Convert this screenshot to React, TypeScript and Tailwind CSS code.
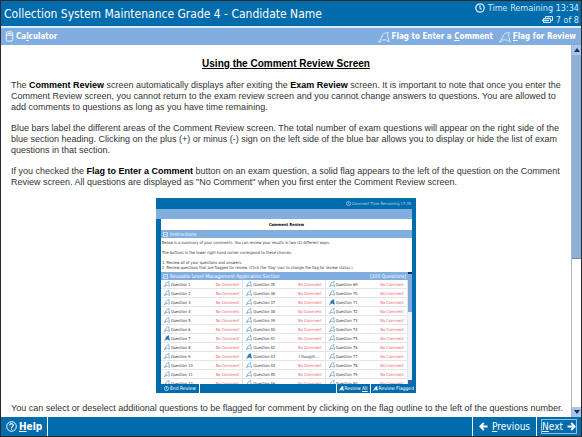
import type { ReactNode } from "react";

const uiFont = "font-['DejaVu_Sans_Condensed','DejaVu_Sans',sans-serif] [font-stretch:condensed]";
const FIRST_QUESTIONS = [1, 35, 69];
const FLAGGED = [7, 43, 71];

function Flag({ className, solid = false }: { className: string; solid?: boolean }) {
  return (
    <svg viewBox="0 0 12 12" className={className} fill={solid ? "currentColor" : "none"} stroke="currentColor" strokeWidth="1" aria-hidden="true">
      <path d="M1.2 10.8 5 3.4C6.4 1.6 7.6 2.6 10 1L9.6 5.4l1.6 5.2C9 10.8 8 8 6 8.8 4.4 9.4 3.6 9 2.6 8.6" />
      <path d="M.2 10.8h3" />
    </svg>
  );
}

function Calculator() {
  return (
    <svg viewBox="0 0 9 12" className="h-[11px] w-[9px]" fill="none" stroke="currentColor" aria-hidden="true">
      <rect x="1" y="1" width="7" height="10" rx="1.5" />
      <path d="M1 4.5h7M2.5 2.8h4" />
    </svg>
  );
}

function Clock({ className }: { className: string }) {
  return (
    <svg viewBox="0 0 10 10" className={className} fill="none" stroke="currentColor" strokeWidth="1.3" aria-hidden="true">
      <circle cx="5" cy="5" r="4.2" />
      <path d="M5 2.2v3l1.6 1.4" />
    </svg>
  );
}

function Pages() {
  return (
    <svg viewBox="0 0 12 8" className="h-2 w-3" fill="none" stroke="currentColor" aria-hidden="true">
      <path d="M3.5 2.5v-2h7v4H9M1.5 2.5h7v4h-7z" />
      <path d="M0 4.5h7M5 .5h4" strokeWidth="1.4" />
    </svg>
  );
}

function Arrow({ className }: { className: string }) {
  return (
    <svg viewBox="0 0 9 9" className={className} fill="none" stroke="currentColor" strokeWidth="1.8" aria-hidden="true">
      <path d="M8.5 4.5H1.5M4.8 1 1.3 4.5 4.8 8" />
    </svg>
  );
}

function Help() {
  return (
    <svg viewBox="0 0 11 11" className="size-[11px]" fill="none" stroke="currentColor" aria-hidden="true">
      <circle cx="5.5" cy="5.5" r="4.8" />
      <path d="M3.8 4.3c0-2.2 3.5-2 3.5 0 0 1.2-1.7 1.2-1.7 2.6M5.6 7.6v1.2" strokeWidth="1.2" />
    </svg>
  );
}

function Section({ children, count }: { children: ReactNode; count?: string }) {
  return (
    <div className="flex h-2 items-center gap-[2px] bg-[#82addf] px-[2px] text-[5px] leading-[8px] text-white">
      <svg viewBox="0 0 5 5" className="size-[5px]" fill="none" stroke="currentColor" strokeWidth=".6" aria-hidden="true">
        <path d="M.5.5h4v4h-4zM1.5 2.5h2" />
      </svg>
      <span className="flex-1">{children}</span>
      {count && <span>{count}</span>}
    </div>
  );
}

function QuestionCell({ number }: { number: number }) {
  return (
    <td className="h-[9px] border-r border-b border-[#e2e6ea] p-0">
      <div className="flex items-center gap-px pr-[3px] pl-[3px]">
        <Flag className="size-[6px] shrink-0 text-[#2474b5]" solid={FLAGGED.includes(number)} />
        <span className="flex-1">Question {number}</span>
        {number === 43 ? <span className="pr-[2px]">I thought ...</span> : <span className="text-[#f0525c]">No Comment</span>}
      </div>
    </td>
  );
}

function ReviewPreview() {
  return (
    <figure className={`mx-auto w-[260px] bg-[#006cab] text-[4px] leading-[5px] text-[#333] ${uiFont}`}>
      <div className="flex h-[11px] items-center justify-end gap-px pr-[5px] text-[#b9daf2]">
        <Clock className="size-[5px]" />
        Comment Time Remaining 17:35
      </div>
      <div className="mr-1 h-[10px] bg-[#82addf]" />
      <div className="mr-1 ml-[5px] bg-white">
        <h2 className="py-[3px] text-center font-bold text-black">Comment Review</h2>
        <Section>Instructions</Section>
        <div className="flex flex-col gap-[5px] px-px pt-[2px] pb-[2px]">
          <p>Below is a summary of your comments. You can review your results in two (2) different ways.</p>
          <p>The buttons in the lower right-hand corner correspond to these choices:</p>
          <p>
            1. Review all of your questions and answers.
            <br />
            2. Review questions that are flagged for review. (Click the &apos;flag&apos; icon to change the flag for review status.)
          </p>
        </div>
        <div className="flex h-[112px]">
          <div className="flex-1 overflow-hidden">
            <Section count="[100 Questions]">Reusable Level Management Application Section</Section>
            <table className="w-full table-fixed border-separate border-spacing-0">
              <tbody>
                {Array.from({ length: 12 }, (_, row) => (
                  <tr key={row}>
                    {FIRST_QUESTIONS.map((first) => (
                      <QuestionCell key={first} number={first + row} />
                    ))}
                  </tr>
                ))}
              </tbody>
            </table>
          </div>
          <div className="flex w-1 flex-col justify-between bg-[#eef2f7]">
            <div className="h-10 border-t-2 border-[#12306a] bg-[#82a9dc]" />
            <div className="h-1 bg-[#2f66a6]" />
          </div>
        </div>
      </div>
      <div className="flex h-[9px] items-stretch text-[5px] text-white">
        <span className="ml-[5px] flex items-center gap-px border-r border-white px-[3px]">
          <Clock className="size-[5px]" />
          End Review
        </span>
        <span className="ml-auto flex items-center gap-px border-l border-white px-[2px]">
          <Flag className="size-[5px]" solid />
          <span>Review <u>All</u></span>
        </span>
        <span className="flex items-center gap-px border-l border-white px-[2px]">
          <Flag className="size-[5px]" solid />
          Review Flagged
        </span>
      </div>
    </figure>
  );
}

function ScrollArrow({ up = false }: { up?: boolean }) {
  return (
    <button type="button" aria-label={up ? "Scroll up" : "Scroll down"} className="flex h-[10px] items-center justify-center bg-[#a9c4e6] text-[#12306a]">
      <svg viewBox="0 0 6 4" className="h-1 w-[6px]" fill="currentColor" aria-hidden="true">
        <path d={up ? "M0 4 3 0l3 4z" : "M0 0h6L3 4z"} />
      </svg>
    </button>
  );
}

export default function App() {
  return (
    <div className={`flex h-screen flex-col border border-[#2b2b2b] bg-white ${uiFont}`}>
      <header className="flex h-[25px] shrink-0 items-center justify-between bg-[#006cab] pr-[2px] pl-[3px] text-white">
        <h1 className="text-[12px] leading-4">Collection System Maintenance Grade 4 - Candidate Name</h1>
        <div className="flex flex-col items-end text-[9px] leading-[12px] text-[#d3eafa]">
          <span className="flex items-center gap-[3px]">
            <Clock className="size-[10px]" />
            Time Remaining 13:34
          </span>
          <span className="flex items-center gap-[2px]">
            <Pages />7 of 8
          </span>
        </div>
      </header>
      <nav className="flex h-[19px] shrink-0 items-center gap-[6px] border-t-2 border-[#d8ecfa] bg-[#82addf] pr-[5px] pl-1 text-[8px] leading-3 font-bold text-white">
        <button type="button" className="mr-auto flex items-center gap-[2px]">
          <Calculator />
          <span>Ca<u>l</u>culator</span>
        </button>
        <button type="button" className="flex items-center gap-[2px]">
          <Flag className="size-3 opacity-70" />
          <span>Flag to Enter a <u>C</u>omment</span>
        </button>
        <button type="button" className="flex items-center gap-[2px]">
          <Flag className="size-3 opacity-70" />
          <span><u>F</u>lag for Review</span>
        </button>
      </nav>
      <div className="flex min-h-0 flex-1">
        <main className="flex min-w-0 flex-1 flex-col gap-[10px] overflow-hidden pt-[13px] font-['Liberation_Sans',Arial,sans-serif] text-[9px] leading-[11px] text-[#333]">
          <h2 className="text-center text-[10px] leading-3 font-bold text-black underline">Using the Comment Review Screen</h2>
          <p className="pl-[10px]">
            The <b className="text-black">Comment Review</b> screen automatically displays after exiting the <b className="text-black">Exam Review</b> screen. It is important to note that once you enter the Comment Review screen, you cannot return to the exam review screen and you cannot change answers to questions. You are allowed to add comments to questions as long as you have time remaining.
          </p>
          <p className="pl-[10px]">
            Blue bars label the different areas of the Comment Review screen. The total number of exam questions will appear on the right side of the blue section heading. Clicking on the plus (+) or minus (-) sign on the left side of the blue bar allows you to display or hide the list of exam questions in that section.
          </p>
          <p className="pl-[10px]">
            If you checked the <b className="text-black">Flag to Enter a Comment</b> button on an exam question, a solid flag appears to the left of the question on the Comment Review screen. All questions are displayed as &quot;No Comment&quot; when you first enter the Comment Review screen.
          </p>
          <ReviewPreview />
          <p className="pl-[10px]">You can select or deselect additional questions to be flagged for comment by clicking on the flag outline to the left of the questions number.</p>
        </main>
        <div className="flex w-[10px] flex-col border-l border-[#b4b4c4]">
          <ScrollArrow up />
          <div className="flex flex-1 flex-col">
            <div className="h-[58%] border-b border-[#7389b8] bg-[#8eb0d8]" />
          </div>
          <ScrollArrow />
        </div>
      </div>
      <footer className="flex h-[19px] shrink-0 items-stretch bg-[#006cab] text-[10px] leading-[13px] text-white">
        <button type="button" className="flex items-center gap-[2px] border-r border-white pr-[5px] pl-[5px] font-bold">
          <Help />
          <span><u>H</u>elp</span>
        </button>
        <button type="button" className="ml-auto flex items-center gap-1 border-l border-white px-[6px]">
          <Arrow className="size-[9px]" />
          <span><u>P</u>revious</span>
        </button>
        <button type="button" className="flex items-center border-l border-white px-1">
          <span className="flex items-center gap-1 border border-[#8fc0e4]">
            <span><u>N</u>ext</span>
            <Arrow className="size-[9px] rotate-180" />
          </span>
        </button>
      </footer>
    </div>
  );
}
